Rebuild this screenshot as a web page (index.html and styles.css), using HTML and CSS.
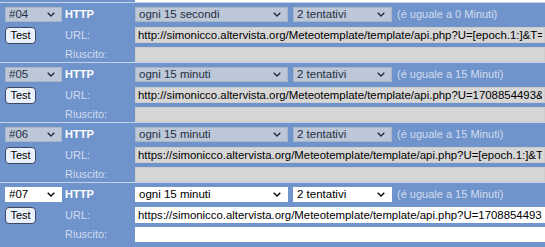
FILE: index.html
```html
<!DOCTYPE html>
<html>
<head>
<meta charset="utf-8">
<link rel="stylesheet" href="styles.css">
</head>
<body>
<div class="list">
  <div class="stub"><div class="stub-input"></div></div>

  <div class="block">
    <select class="sel num" disabled><option>#04</option></select>
    <div class="proto">HTTP</div>
    <div class="opts">
      <select class="sel freq" disabled><option>ogni 15 secondi</option></select>
      <select class="sel tries" disabled><option>2 tentativi</option></select>
      <span class="note">(é uguale a 0 Minuti)</span>
    </div>
    <button class="test">Test</button>
    <div class="lbl">URL:</div>
    <input class="inp url" disabled value="http://simonicco.altervista.org/Meteotemplate/template/api.php?U=[epoch.1:]&amp;T=">
    <div class="lbl-spacer"></div>
    <div class="lbl res">Riuscito:</div>
    <input class="inp res" disabled value="">
  </div>

  <div class="block">
    <select class="sel num" disabled><option>#05</option></select>
    <div class="proto">HTTP</div>
    <div class="opts">
      <select class="sel freq" disabled><option>ogni 15 minuti</option></select>
      <select class="sel tries" disabled><option>2 tentativi</option></select>
      <span class="note">(é uguale a 15 Minuti)</span>
    </div>
    <button class="test">Test</button>
    <div class="lbl">URL:</div>
    <input class="inp url" disabled value="http://simonicco.altervista.org/Meteotemplate/template/api.php?U=1708854493&amp;T=">
    <div class="lbl-spacer"></div>
    <div class="lbl res">Riuscito:</div>
    <input class="inp res" disabled value="">
  </div>

  <div class="block">
    <select class="sel num" disabled><option>#06</option></select>
    <div class="proto">HTTP</div>
    <div class="opts">
      <select class="sel freq" disabled><option>ogni 15 minuti</option></select>
      <select class="sel tries" disabled><option>2 tentativi</option></select>
      <span class="note">(é uguale a 15 Minuti)</span>
    </div>
    <button class="test">Test</button>
    <div class="lbl">URL:</div>
    <input class="inp url" disabled value="https://simonicco.altervista.org/Meteotemplate/template/api.php?U=[epoch.1:]&amp;T=">
    <div class="lbl-spacer"></div>
    <div class="lbl res">Riuscito:</div>
    <input class="inp res" disabled value="">
  </div>

  <div class="block">
    <select class="sel num"><option>#07</option></select>
    <div class="proto">HTTP</div>
    <div class="opts">
      <select class="sel freq"><option>ogni 15 minuti</option></select>
      <select class="sel tries"><option>2 tentativi</option></select>
      <span class="note">(é uguale a 15 Minuti)</span>
    </div>
    <button class="test">Test</button>
    <div class="lbl">URL:</div>
    <input class="inp url" value="https://simonicco.altervista.org/Meteotemplate/template/api.php?U=1708854493&amp;T=">
    <div class="lbl-spacer"></div>
    <div class="lbl res">Riuscito:</div>
    <input class="inp res" value="">
  </div>
</div>
</body>
</html>
```
FILE: styles.css
```css
html, body {
  margin: 0;
  padding: 0;
  background: #6f93cb;
  overflow: hidden;
}
body {
  font-family: "Liberation Sans", Arial, sans-serif;
  font-size: 11px;
  width: 545px;
  height: 247px;
}
.list {
  width: 545px;
}
.stub {
  height: 2px;
  padding-left: 135px;
}
.stub-input {
  height: 2px;
  background: #ffffff;
}
.block {
  display: grid;
  grid-template-columns: 57px 67px 410px;
  grid-template-rows: 15px 21px 19px;
  column-gap: 3px;
  padding: 4px 0 0 5px;
  border-top: 1px solid #c3d3ec;
  align-items: end;
}
.sel {
  appearance: none;
  -webkit-appearance: none;
  box-sizing: border-box;
  font-family: "Liberation Sans", Arial, sans-serif;
  font-size: 11.5px;
  height: 15px;
  line-height: 13px;
  padding: 0 0 0 3px;
  margin: 0;
  border: 1px solid #c4c4c4;
  border-radius: 0;
  background-color: #dddddd;
  color: #000;
  background-image: url("data:image/svg+xml;utf8,<svg xmlns='http://www.w3.org/2000/svg' width='8' height='5'><path d='M0.7 0.7 L4 4 L7.3 0.7' fill='none' stroke='black' stroke-width='1.3'/></svg>");
  background-repeat: no-repeat;
  background-position: right 6px center;
  align-self: start;
}
.sel:not([disabled]) {
  background-color: #ffffff;
  border-color: #ffffff;
}
.num { width: 57px; }
.proto {
  color: #ffffff;
  font-weight: bold;
  font-size: 11px;
  line-height: 15px;
  align-self: start;
}
.opts {
  display: flex;
  align-items: center;
  gap: 5px;
  min-width: 0;
  white-space: nowrap;
  align-self: start;
  height: 15px;
}
.freq { width: 153px; flex: none; }
.tries { width: 99px; flex: none; }
.note {
  color: #d2ddef;
  font-size: 11px;
  line-height: 15px;
  margin-left: 0;
}
.test {
  box-sizing: border-box;
  width: 31px;
  height: 17px;
  padding: 0;
  margin: 0 0 -1px 0;
  font-family: "Liberation Sans", Arial, sans-serif;
  font-size: 11px;
  line-height: 15px;
  color: #000;
  background: #eaf1fc;
  border: 1px solid #3c4a66;
  border-radius: 4px;
}
.lbl {
  color: #d2ddef;
  font-size: 11px;
  line-height: 16px;
}
.lbl.res {
  line-height: 15px;
}
.inp {
  box-sizing: border-box;
  width: 410px;
  height: 16px;
  margin: 0;
  padding: 0 2px;
  font-family: "Liberation Sans", Arial, sans-serif;
  font-size: 11.4px;
  border: 1px solid #cdcdcd;
  background: #d6d6d6;
  color: #000;
  outline: none;
}
.inp.res {
  height: 15px;
}
.inp:not([disabled]) {
  background: #ffffff;
  border-color: #ffffff;
}
```
